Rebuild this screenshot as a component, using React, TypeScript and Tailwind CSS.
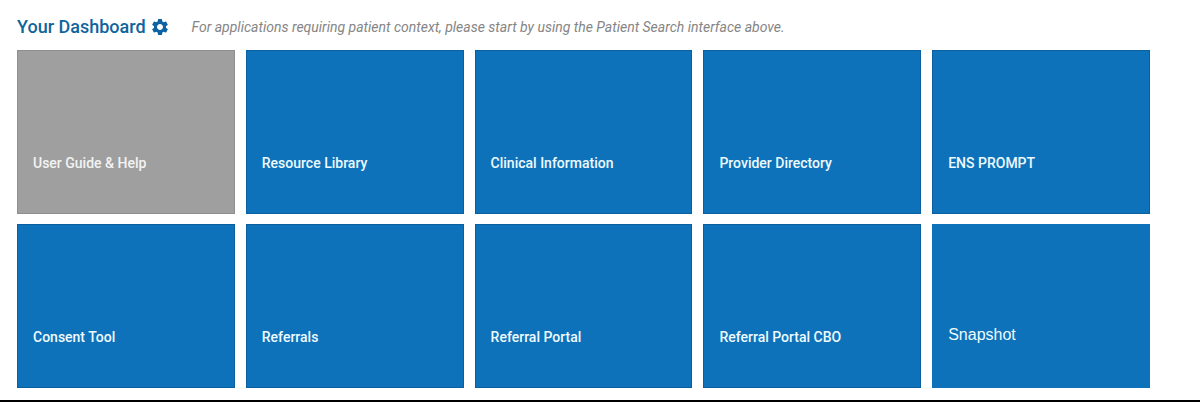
import clsx from "clsx";
import { MdSettings } from "react-icons/md";

type Tile = {
  label: string;
  href: string;
  variant?: "help" | "plain";
};

const tiles: Tile[] = [
  { label: "User Guide & Help", href: "#help", variant: "help" },
  { label: "Resource Library", href: "#resources" },
  { label: "Clinical Information", href: "#clinical" },
  { label: "Provider Directory", href: "#providers" },
  { label: "ENS PROMPT", href: "#ens-prompt" },
  { label: "Consent Tool", href: "#consent" },
  { label: "Referrals", href: "#referrals" },
  { label: "Referral Portal", href: "#referral-portal" },
  { label: "Referral Portal CBO", href: "#referral-portal-cbo" },
  { label: "Snapshot", href: "#snapshot", variant: "plain" },
];

function DashboardTile({ label, href, variant }: Tile) {
  return (
    <a
      href={href}
      className={clsx(
        "flex h-[164px] items-end border px-[15px]",
        variant === "help" && "border-[#8f8f8f] bg-[#9f9f9f] text-[#f3f3f3]",
        variant === "plain" && "border-[#0d72b9] bg-[#0d72b9] text-[#eefaff]",
        !variant && "border-[#0a5f9e] bg-[#0d72b9] text-[#eefaff]",
        variant === "plain"
          ? "pb-[42px] font-['Liberation_Sans',sans-serif] text-base leading-5"
          : "pb-10 text-sm leading-5 font-medium",
      )}
    >
      {label}
    </a>
  );
}

export default function App() {
  return (
    <main className="border-b-2 border-black bg-white pr-[50px] pb-3 pl-[17px] font-[Roboto,sans-serif]">
      <header className="flex items-center pt-4 pb-3">
        <h1 className="text-lg leading-[22px] font-medium text-[#10649c]">
          Your Dashboard
        </h1>
        <button
          type="button"
          aria-label="Dashboard settings"
          className="ml-1 text-[#0d62a3]"
        >
          <MdSettings className="size-5" />
        </button>
        <p className="ml-[22px] text-sm leading-[22px] text-[#858585] italic">
          For applications requiring patient context, please start by using the
          Patient Search interface above.
        </p>
      </header>
      <nav
        aria-label="Applications"
        className="grid grid-cols-5 gap-x-[11px] gap-y-[10px]"
      >
        {tiles.map((tile) => (
          <DashboardTile key={tile.label} {...tile} />
        ))}
      </nav>
    </main>
  );
}
